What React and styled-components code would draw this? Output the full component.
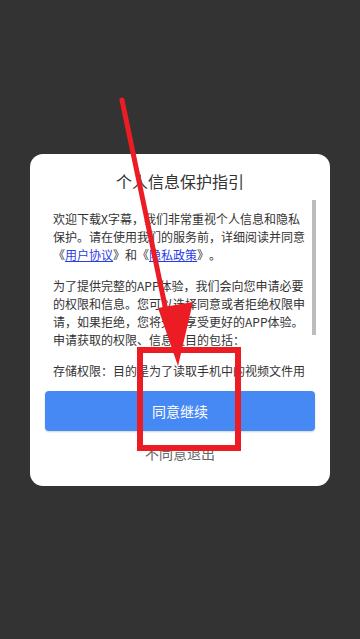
import React from "react";
import styled, { createGlobalStyle } from "styled-components";

const GlobalStyle = createGlobalStyle`
  html, body {
    margin: 0;
    padding: 0;
    background: #333333;
    font-family: "Noto Sans CJK SC", "Noto Sans", sans-serif;
  }
`;

const Screen = styled.div`
  position: relative;
  width: 360px;
  height: 639px;
  background: #333333;
  display: flex;
  align-items: center;
  justify-content: center;
  overflow: hidden;
`;

const Dialog = styled.div`
  width: 300px;
  box-sizing: border-box;
  background: #ffffff;
  border-radius: 13px;
  padding: 15px 15px 22px;
  display: flex;
  flex-direction: column;
`;

const Title = styled.div`
  font-size: 16px;
  line-height: 24px;
  color: #333333;
  text-align: center;
`;

// text area + a fake scrollbar beside it
const Body = styled.div`
  margin: 7px -1px 0 8px;
  height: 181px;
  display: flex;
  gap: 6px;
`;

const TextColumn = styled.div`
  flex: 1;
  overflow: hidden;
  padding-top: 10px;
  box-sizing: border-box;
`;

const ScrollTrack = styled.div`
  width: 4px;
  flex: none;
`;

const ScrollThumb = styled.div`
  height: 135px;
  background: #bcbcbc;
`;

const Para = styled.p`
  margin: 0 0 13px;
  font-size: 12px;
  line-height: 18px;
  color: #333333;
  text-spacing-trim: space-all;
`;

const Link = styled.a`
  color: #2a3ce6;
  text-decoration: underline;
`;

const PrimaryButton = styled.button`
  margin-top: 10px;
  height: 40px;
  border: none;
  border-radius: 4px;
  background: #4689f4;
  color: #ffffff;
  font-family: inherit;
  font-size: 14px;
  box-shadow: 0 1px 2px rgba(0, 0, 0, 0.18);
`;

const TextButton = styled.div`
  margin-top: 11px;
  font-size: 14px;
  line-height: 22px;
  color: #666666;
  text-align: center;
`;

const Annotation = styled.svg`
  position: absolute;
  left: 0;
  top: 0;
  width: 360px;
  height: 639px;
  pointer-events: none;
`;

const RED = "#ec1c24";

export default function App() {
  return (
    <>
      <GlobalStyle />
      <Screen>
        <Dialog>
          <Title>个人信息保护指引</Title>
          <Body>
            <TextColumn>
              <Para>
                欢迎下载X字幕，我们非常重视个人信息和隐私保护。请在使用我们的服务前，详细阅读并同意《
                <Link>用户协议</Link>》和《<Link>隐私政策</Link>》。
              </Para>
              <Para>
                为了提供完整的APP体验，我们会向您申请必要的权限和信息。您可以选择同意或者拒绝权限申请，如果拒绝，您将无法享受更好的APP体验。申请获取的权限、信息及目的包括：
              </Para>
              <Para>
                存储权限：目的是为了读取手机中的视频文件用于语音识别和字幕制作，以及将制作完成的视频保存到您的手机相册中。
              </Para>
            </TextColumn>
            <ScrollTrack>
              <ScrollThumb />
            </ScrollTrack>
          </Body>
          <PrimaryButton>同意继续</PrimaryButton>
          <TextButton>不同意退出</TextButton>
        </Dialog>
        <Annotation viewBox="0 0 360 639">
          <line x1="122" y1="100" x2="170" y2="330" stroke={RED} strokeWidth="5" strokeLinecap="round" />
          <polygon points="158,308 193,302 178,366" fill={RED} />
          <rect x="140" y="350" width="98" height="98" fill="none" stroke={RED} strokeWidth="6" />
        </Annotation>
      </Screen>
    </>
  );
}
